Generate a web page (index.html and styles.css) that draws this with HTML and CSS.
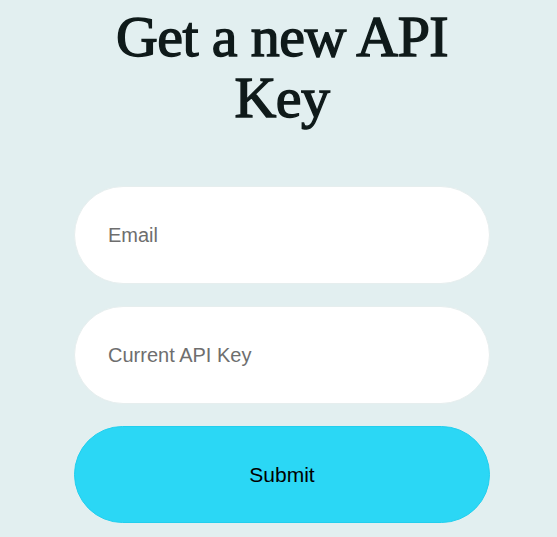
FILE: index.html
```html
<!DOCTYPE html>
<html>
<head>
<meta charset="utf-8">
<link rel="stylesheet" href="styles.css">
</head>
<body>
<main class="page">
  <h1 class="title">Get a new API Key</h1>
  <form class="form">
    <input class="field" type="email" placeholder="Email">
    <input class="field" type="text" placeholder="Current API Key">
    <button class="submit" type="button">Submit</button>
  </form>
</main>
</body>
</html>
```
FILE: styles.css
```css
html, body {
  margin: 0;
  background: #e2eff0;
}
.page {
  padding: 0 67px 0 74px;
  display: flex;
  flex-direction: column;
}
.title {
  margin: 0;
  padding-top: 6px;
  font-family: "Liberation Serif", serif;
  font-weight: 400;
  font-size: 58px;
  line-height: 61px;
  color: #0f1a1a;
  text-align: center;
  letter-spacing: -0.6px;
  -webkit-text-stroke: 1.4px #0f1a1a;
}
.form {
  margin-top: 58px;
  display: flex;
  flex-direction: column;
  gap: 22px;
}
.field, .submit {
  box-sizing: border-box;
  width: 100%;
  height: 98px;
  border-radius: 49px;
  font-family: "Liberation Sans", sans-serif;
  font-size: 20px;
  outline: none;
}
.field {
  border: 1px solid #e6eeee;
  background: #ffffff;
  padding: 0 33px;
  color: #333;
}
.field::placeholder {
  color: #6e6e6e;
}
.submit {
  border: 1px solid #22cfee;
  background: #2bd7f5;
  color: #000;
  height: 97px;
  font-size: 21px;
}
```
